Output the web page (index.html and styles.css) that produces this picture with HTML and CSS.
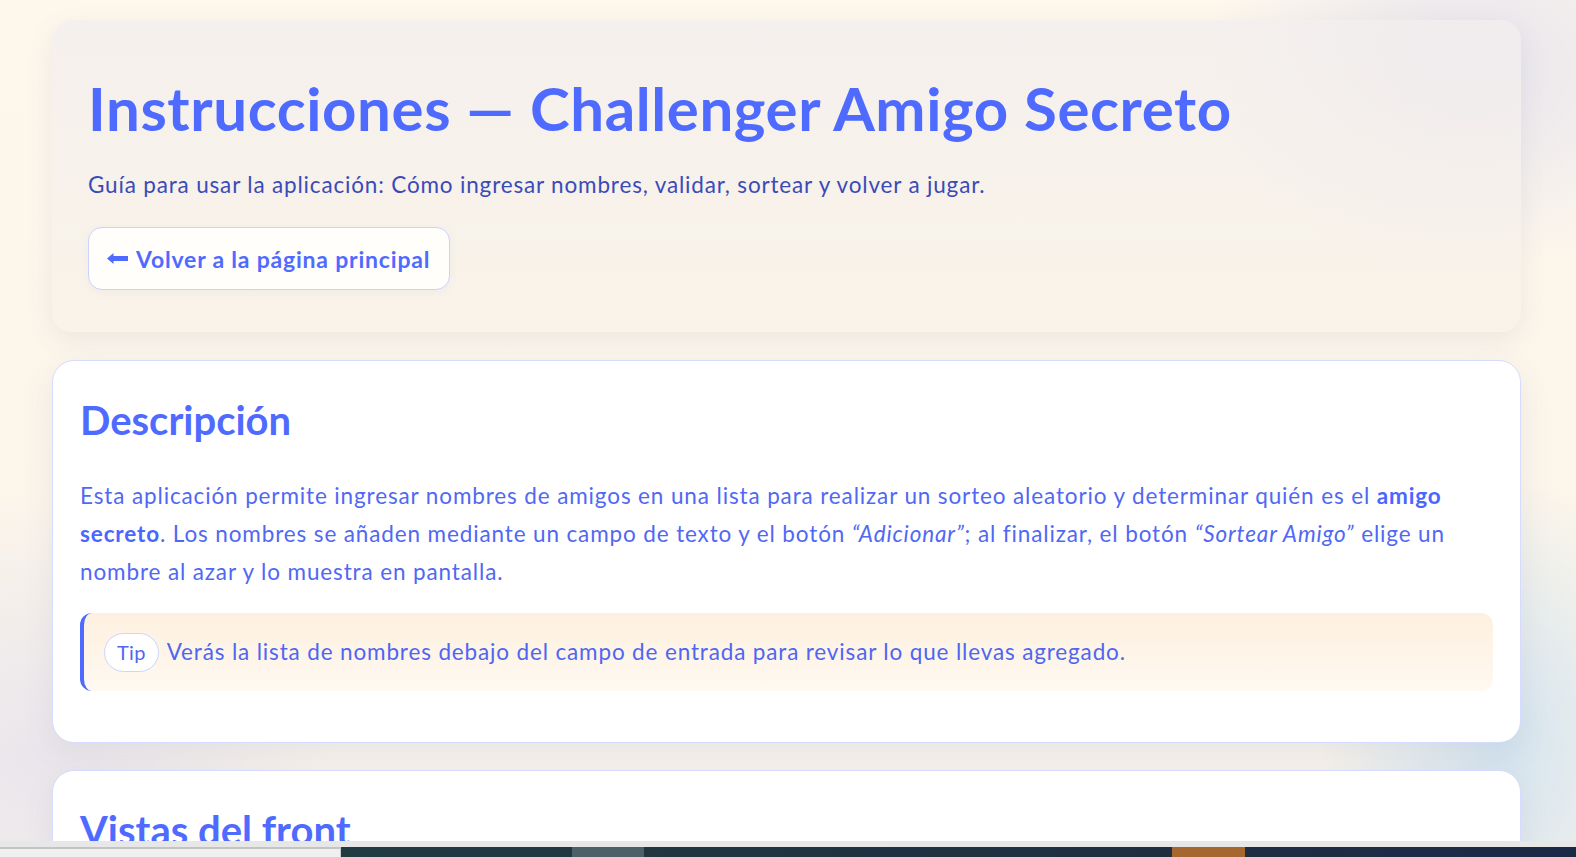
FILE: index.html
```html
<!DOCTYPE html>
<html lang="es">
<head>
<meta charset="utf-8">
<title>Instrucciones — Challenger Amigo Secreto</title>
<link rel="stylesheet" href="styles.css">
</head>
<body>
<main class="page">
  <header class="hero">
    <h1 class="hero-title">Instrucciones — Challenger Amigo Secreto</h1>
    <p class="hero-sub">Guía para usar la aplicación: Cómo ingresar nombres, validar, sortear y volver a jugar.</p>
    <a class="back-btn" href="#"><svg class="back-icon" width="21" height="11" viewBox="0 0 21 11" aria-hidden="true"><path d="M0 5.5 L6.5 0 V3 H21 V8 H6.5 V11 Z" fill="currentColor"/></svg><span>Volver a la página principal</span></a>
  </header>

  <section class="card">
    <h2 class="card-title">Descripción</h2>
    <p class="card-text">Esta aplicación permite ingresar nombres de amigos en una lista para realizar un sorteo aleatorio y determinar quién es el <strong>amigo secreto</strong>. Los nombres se añaden mediante un campo de texto y el botón <em>“Adicionar”</em>; al finalizar, el botón <em>“Sortear Amigo”</em> elige un nombre al azar y lo muestra en pantalla.</p>
    <div class="tip"><span class="tip-badge">Tip</span><span class="tip-text">Verás la lista de nombres debajo del campo de entrada para revisar lo que llevas agregado.</span></div>
  </section>

  <section class="card">
    <h2 class="card-title">Vistas del front</h2>
    <p class="card-text">Capturas de la interfaz principal de la aplicación.</p>
  </section>
</main>

<div class="bottom-bar">
  <div class="bottom-line"></div>
  <div class="bottom-row">
    <div class="bottom-left"></div>
    <div class="bottom-dark">
      <span class="seg seg-a"></span>
      <span class="seg seg-b"></span>
    </div>
  </div>
</div>
</body>
</html>
```
FILE: styles.css
```css
* { box-sizing: border-box; }

html, body {
  margin: 0;
  padding: 0;
}

body {
  font-family: "Lato", "Noto Sans", "Liberation Sans", sans-serif;
  color: #4f66f2;
  min-height: 857px;
  background:
    radial-gradient(ellipse 180px 260px at 1500px 740px, rgba(205, 225, 240, 0.85), rgba(205, 225, 240, 0) 100%),
    radial-gradient(ellipse 260px 200px at 1470px 70px, rgba(228, 226, 238, 0.9), rgba(228, 226, 238, 0) 100%),
    radial-gradient(ellipse 300px 260px at 40px 760px, rgba(232, 228, 236, 0.9), rgba(232, 228, 236, 0) 100%),
    linear-gradient(180deg, #fdf7ec 0%, #fbf5ea 60%, #f6f2ec 100%);
  background-attachment: fixed;
}

.page {
  display: flex;
  flex-direction: column;
  gap: 28px;
  padding: 20px 55px 60px 52px;
}

/* ---------- hero ---------- */
.hero {
  border-radius: 20px;
  padding: 52px 36px 42px;
  background: linear-gradient(180deg, rgba(242, 238, 238, 0.75) 0%, rgba(248, 242, 232, 0.75) 100%);
  box-shadow: 0 8px 26px rgba(120, 110, 150, 0.10);
}

.hero-title {
  margin: 0;
  font-size: 60px;
  line-height: 72px;
  font-weight: 700;
  color: #4f6bff;
  letter-spacing: 0.6px;
}

.hero-sub {
  margin: 23px 0 0;
  font-size: 22.5px;
  line-height: 35px;
  letter-spacing: 0.83px;
  color: #3a4bb8;
}

.back-btn {
  margin-top: 25px;
  display: inline-flex;
  align-items: center;
  gap: 8px;
  height: 63px;
  padding: 0 19px 0 18px;
  border: 1px solid #cbd2ff;
  border-radius: 14px;
  background: #fffefb;
  color: #4f6bff;
  font-size: 23px;
  font-weight: 700;
  letter-spacing: 0.8px;
  text-decoration: none;
  box-shadow: 0 2px 8px rgba(120, 120, 180, 0.06);
}

.back-icon {
  display: block;
  flex: none;
}

/* ---------- cards ---------- */
.card {
  background: #ffffff;
  border: 1px solid #d6dcff;
  border-radius: 22px;
  padding: 35px 27px 51px;
  box-shadow: 0 10px 30px rgba(110, 105, 150, 0.10);
}

.card + .card {
  margin-top: -1px;
}

.card-title {
  margin: 0;
  font-size: 40px;
  line-height: 48px;
  font-weight: 700;
  color: #4f6bff;
}

.card-text {
  margin: 33px 0 0;
  font-size: 22.5px;
  line-height: 38px;
  letter-spacing: 0.87px;
  color: #5068f3;
}

.card-text strong {
  font-weight: 700;
  color: #4a66ff;
}

.card-text em {
  font-style: italic;
}

.tip {
  margin-top: 22px;
  display: flex;
  align-items: center;
  gap: 8px;
  padding: 19.5px 20px;
  border-left: 4px solid #4f6bff;
  border-radius: 12px;
  background: linear-gradient(180deg, #fdf0df 0%, #fff9f1 100%);
  font-size: 22.5px;
  line-height: 38px;
  letter-spacing: 0.85px;
  color: #4f66f2;
}

.tip-badge {
  display: inline-flex;
  align-items: center;
  justify-content: center;
  height: 39px;
  padding: 0 12px;
  border: 1px solid #cdd4ff;
  border-radius: 20px;
  background: #ffffff;
  font-size: 20px;
  line-height: 1;
  letter-spacing: 0.3px;
  color: #4f66f2;
}

/* ---------- bottom strip ---------- */
.bottom-bar {
  position: fixed;
  left: 0;
  right: 0;
  bottom: 0;
  height: 16px;
  display: flex;
  flex-direction: column;
}

.bottom-line {
  height: 6px;
  background: #e7e7e7;
}

.bottom-row {
  flex: 1;
  display: flex;
}

.bottom-left {
  width: 341px;
  background: #f0f0f0;
  border-top: 2px solid #c3c3c3;
  border-right: 1px solid #c9c9c9;
}

.bottom-dark {
  position: relative;
  flex: 1;
  background: linear-gradient(90deg, #223a42 0%, #1f2f40 60%, #1c2946 100%);
}

.seg {
  position: absolute;
  top: 0;
  bottom: 0;
}

.seg-a {
  left: 231px;
  width: 72px;
  background: #4d5f67;
}

.seg-b {
  left: 831px;
  width: 73px;
  background: #a5662f;
}
```
